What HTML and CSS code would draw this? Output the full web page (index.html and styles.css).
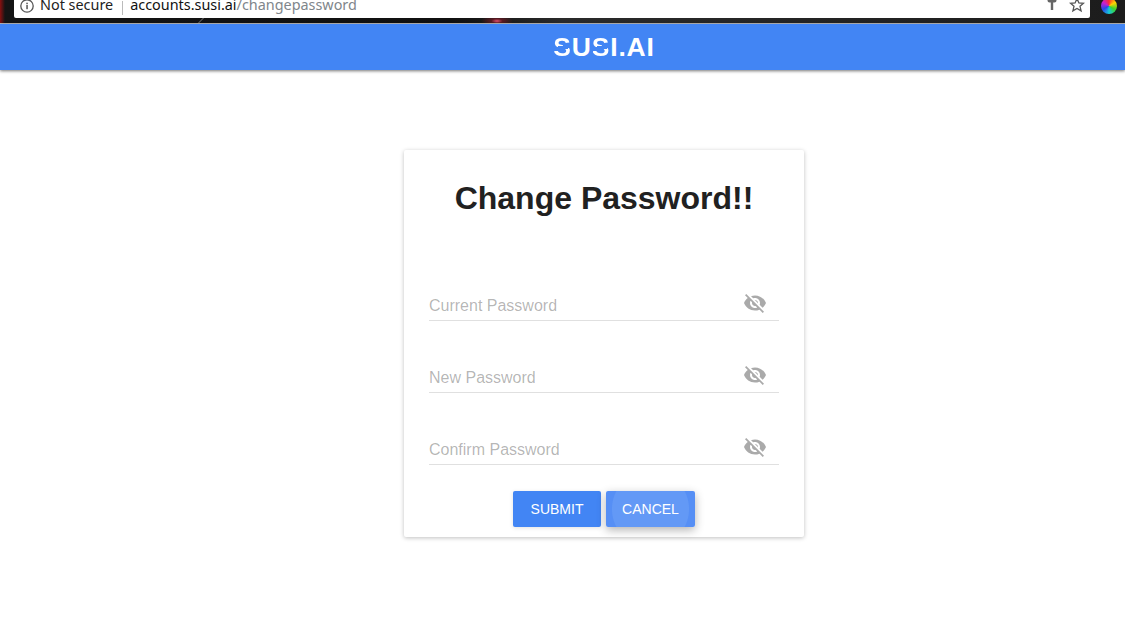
FILE: index.html
```html
<!DOCTYPE html>
<html lang="en">
<head>
    <meta charset="UTF-8">
    <meta name="viewport" content="width=device-width, initial-scale=1.0">
    <title>Change Password</title>
    <link rel="stylesheet" href="styles.css">
</head>
<body>
    <!-- browser toolbar, cut off at the top of the shot -->
    <div class="browser-bar">
        <div class="address">
            <svg class="info-icon" viewBox="0 0 16 16" width="16" height="16">
                <circle cx="8" cy="8" r="6.2" fill="none" stroke="#555" stroke-width="1.3"/>
                <rect x="7.3" y="7" width="1.5" height="4.2" fill="#555"/>
                <rect x="7.3" y="4.7" width="1.5" height="1.5" fill="#555"/>
            </svg>
            <span class="not-secure">Not secure</span>
            <span class="divider"></span>
            <span class="host">accounts.susi.ai</span><span class="path">/changepassword</span>
            <svg class="key-icon" viewBox="0 0 12 14" width="12" height="14">
                <path d="M1.5 0h9v3.5a2 2 0 0 1-2 2H7.2V13H4.8V5.5H3.5a2 2 0 0 1-2-2z" fill="#666"/>
            </svg>
            <svg class="star-icon" viewBox="0 0 16 16" width="16" height="16">
                <path d="M8 1.6l1.9 4.3 4.6.4-3.5 3 1.1 4.6L8 11.5l-4.1 2.4L5 9.3l-3.5-3 4.6-.4z" fill="none" stroke="#555" stroke-width="1.3"/>
            </svg>
        </div>
        <div class="color-wheel"></div>
    </div>

    <header class="topbar">
        <div class="logo"><span class="logo-s">S</span>U<span class="logo-s">S</span>I.AI</div>
    </header>

    <main class="page">
        <form class="card">
            <h1>Change Password!!</h1>

            <div class="field">
                <span class="label">Current Password</span>
                <svg class="eye" viewBox="0 0 24 24" width="24" height="24"><path d="M12 7c2.76 0 5 2.24 5 5 0 .65-.13 1.26-.36 1.83l2.92 2.92c1.51-1.26 2.7-2.89 3.43-4.75-1.73-4.39-6-7.5-11-7.5-1.4 0-2.74.25-3.98.7l2.16 2.16C10.74 7.13 11.35 7 12 7zM2 4.27l2.28 2.28.46.46C3.08 8.3 1.78 10.02 1 12c1.73 4.39 6 7.5 11 7.5 1.55 0 3.03-.3 4.38-.84l.42.42L19.73 22 21 20.73 3.27 3 2 4.27zM7.53 9.8l1.55 1.55c-.05.21-.08.43-.08.65 0 1.66 1.34 3 3 3 .22 0 .44-.03.65-.08l1.55 1.55c-.67.33-1.41.53-2.2.53-2.76 0-5-2.24-5-5 0-.79.2-1.53.53-2.2zm4.31-.78l3.15 3.15.02-.16c0-1.66-1.34-3-3-3l-.17.01z"/></svg>
            </div>
            <div class="field">
                <span class="label">New Password</span>
                <svg class="eye" viewBox="0 0 24 24" width="24" height="24"><path d="M12 7c2.76 0 5 2.24 5 5 0 .65-.13 1.26-.36 1.83l2.92 2.92c1.51-1.26 2.7-2.89 3.43-4.75-1.73-4.39-6-7.5-11-7.5-1.4 0-2.74.25-3.98.7l2.16 2.16C10.74 7.13 11.35 7 12 7zM2 4.27l2.28 2.28.46.46C3.08 8.3 1.78 10.02 1 12c1.73 4.39 6 7.5 11 7.5 1.55 0 3.03-.3 4.38-.84l.42.42L19.73 22 21 20.73 3.27 3 2 4.27zM7.53 9.8l1.55 1.55c-.05.21-.08.43-.08.65 0 1.66 1.34 3 3 3 .22 0 .44-.03.65-.08l1.55 1.55c-.67.33-1.41.53-2.2.53-2.76 0-5-2.24-5-5 0-.79.2-1.53.53-2.2zm4.31-.78l3.15 3.15.02-.16c0-1.66-1.34-3-3-3l-.17.01z"/></svg>
            </div>
            <div class="field">
                <span class="label">Confirm Password</span>
                <svg class="eye" viewBox="0 0 24 24" width="24" height="24"><path d="M12 7c2.76 0 5 2.24 5 5 0 .65-.13 1.26-.36 1.83l2.92 2.92c1.51-1.26 2.7-2.89 3.43-4.75-1.73-4.39-6-7.5-11-7.5-1.4 0-2.74.25-3.98.7l2.16 2.16C10.74 7.13 11.35 7 12 7zM2 4.27l2.28 2.28.46.46C3.08 8.3 1.78 10.02 1 12c1.73 4.39 6 7.5 11 7.5 1.55 0 3.03-.3 4.38-.84l.42.42L19.73 22 21 20.73 3.27 3 2 4.27zM7.53 9.8l1.55 1.55c-.05.21-.08.43-.08.65 0 1.66 1.34 3 3 3 .22 0 .44-.03.65-.08l1.55 1.55c-.67.33-1.41.53-2.2.53-2.76 0-5-2.24-5-5 0-.79.2-1.53.53-2.2zm4.31-.78l3.15 3.15.02-.16c0-1.66-1.34-3-3-3l-.17.01z"/></svg>
            </div>

            <div class="actions">
                <button type="button" class="btn btn-submit">SUBMIT</button>
                <button type="button" class="btn btn-cancel">CANCEL</button>
            </div>
        </form>
    </main>
</body>
</html>
```

FILE: styles.css
```css
html, body {
    height: 100%;
}

body {
    margin: 0;
    background: #fff;
    font-family: 'Liberation Sans', Arial, sans-serif;
    overflow: hidden;
}

/* Browser toolbar */
.browser-bar {
    height: 23px;
    padding-left: 14px;
    display: flex;
    align-items: flex-start;
    background:
        radial-gradient(ellipse 16px 6px at 497px 21px, #e0506e 0, #5a1a22 35%, transparent 100%),
        linear-gradient(135deg, transparent 40%, #666 50%, transparent 60%) 197px 18px / 8px 5px no-repeat,
        linear-gradient(90deg, #8a1010 0, #141414 5px, #101010 40%, #2a2a2a 50%, #1c1c1c 100%);
    border-bottom: 1px solid #b9b9b9;
}

.address {
    width: 1076px;
    height: 18px;
    display: flex;
    align-items: flex-end;
    background: #fff;
    border-bottom-left-radius: 2px;
    border-bottom-right-radius: 2px;
    font-family: 'Noto Sans', sans-serif;
    font-size: 14.4px;
    line-height: 20px;
    overflow: hidden;
    white-space: nowrap;
}

.address span {
    position: relative;
    top: -3px;
}

.info-icon {
    margin: 0 5px 4px 5px;
    flex: none;
}

.not-secure {
    color: #222;
}

.address .divider {
    width: 1px;
    height: 14px;
    margin: 0 7px 0 9px;
    background: #bbb;
    top: -3px;
}

.host {
    color: #111;
}

.path {
    color: #80868b;
}

.key-icon {
    margin-left: auto;
    margin-bottom: 7px;
    margin-right: -1px;
    flex: none;
}

.star-icon {
    margin: 0 5px 5px 12px;
    flex: none;
}

.color-wheel {
    width: 16px;
    height: 16px;
    margin: -2px 0 0 11px;
    border-radius: 50%;
    background: conic-gradient(#ff2d2d, #ffd400, #3cd52e, #15c8d8, #2a45e8, #c81fd0, #ff2d2d);
}

/* Header */
.topbar {
    height: 46px;
    padding-left: 83px;
    display: flex;
    align-items: center;
    justify-content: center;
    background: #4285f4;
    box-shadow: 0 1px 3px rgba(0, 0, 0, 0.55);
    position: relative;
}

.logo {
    color: #fff;
    font-weight: bold;
    font-size: 26.5px;
    line-height: 20px;
    letter-spacing: 0.8px;
}

/* diagonal cut through the S, like the logo */
.logo-s {
    color: transparent;
    background: linear-gradient(168deg, #fff 46%, transparent 46%, transparent 58%, #fff 58%);
    -webkit-background-clip: text;
    background-clip: text;
}

/* Form card */
.page {
    display: flex;
    justify-content: center;
    padding: 80px 0 0 83px;
}

.card {
    width: 400px;
    height: 387px;
    padding: 0 25px;
    box-sizing: border-box;
    background: #fff;
    border-radius: 2px;
    box-shadow: 0 1px 4px rgba(0, 0, 0, 0.25);
}

h1 {
    margin: 0;
    padding-top: 30px;
    height: 69px;
    text-align: center;
    color: #212121;
    font-size: 32px;
    line-height: 37px;
    font-weight: bold;
}

.field {
    height: 72px;
    box-sizing: border-box;
    display: flex;
    align-items: flex-end;
    justify-content: space-between;
    padding: 0 12px 3px 0;
    border-bottom: 1px solid #e0e0e0;
}

.label {
    color: rgba(0, 0, 0, 0.3);
    font-size: 16px;
    line-height: 22px;
}

.eye {
    fill: #aaa;
    margin-bottom: 2px;
}

.actions {
    display: flex;
    justify-content: center;
    gap: 5px;
    margin-top: 26px;
}

.btn {
    height: 36px;
    padding: 0;
    border: none;
    border-radius: 2px;
    color: #fff;
    font-family: inherit;
    font-size: 14px;
}

.btn-submit {
    width: 88px;
    background: #4285f4;
    box-shadow: 0 1px 4px rgba(0, 0, 0, 0.12);
}

.btn-cancel {
    width: 89px;
    background: radial-gradient(circle at 50% 50%, #6399f6 0, #6399f6 38px, #568ff5 39px);
    box-shadow: 0 3px 10px rgba(0, 0, 0, 0.3);
}
```
